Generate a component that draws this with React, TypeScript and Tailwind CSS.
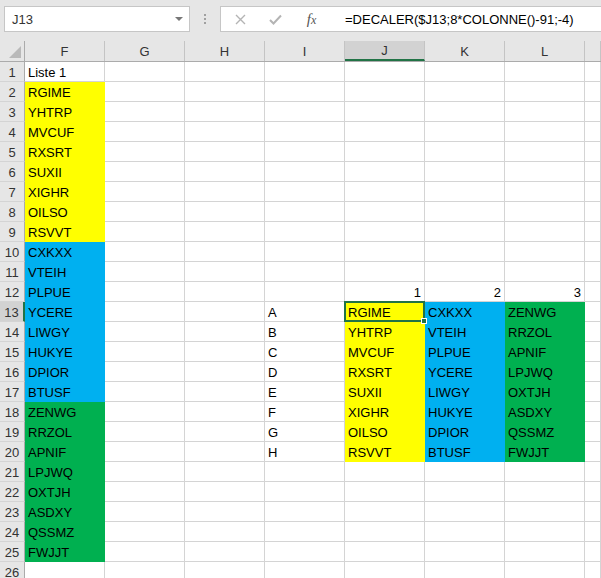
import type { ReactNode } from "react";

const YELLOW = ["RGIME", "YHTRP", "MVCUF", "RXSRT", "SUXII", "XIGHR", "OILSO", "RSVVT"];
const BLUE = ["CXKXX", "VTEIH", "PLPUE", "YCERE", "LIWGY", "HUKYE", "DPIOR", "BTUSF"];
const GREEN = ["ZENWG", "RRZOL", "APNIF", "LPJWQ", "OXTJH", "ASDXY", "QSSMZ", "FWJJT"];
const LETTERS = ["A", "B", "C", "D", "E", "F", "G", "H"];

const COLUMNS = ["F", "G", "H", "I", "J", "K", "L", ""];
const ROWS = Array.from({ length: 26 }, (_, i) => i + 1);

type Fill = "yellow" | "blue" | "green" | null;

type CellData = { text?: string; fill: Fill; right?: boolean };

const FILL_CLASS: Record<string, string> = {
  yellow: "bg-[#ffff00] border-[#ffff00]",
  blue: "bg-[#00b0f0] border-[#00b0f0]",
  green: "bg-[#00b050] border-[#00b050]",
};

function getCell(row: number, col: string): CellData {
  if (col === "F") {
    if (row === 1) return { text: "Liste 1", fill: null };
    if (row >= 2 && row <= 9) return { text: YELLOW[row - 2], fill: "yellow" };
    if (row >= 10 && row <= 17) return { text: BLUE[row - 10], fill: "blue" };
    if (row >= 18 && row <= 25) return { text: GREEN[row - 18], fill: "green" };
  }
  if (row === 12) {
    if (col === "J") return { text: "1", fill: null, right: true };
    if (col === "K") return { text: "2", fill: null, right: true };
    if (col === "L") return { text: "3", fill: null, right: true };
  }
  if (row >= 13 && row <= 20) {
    const i = row - 13;
    if (col === "I") return { text: LETTERS[i], fill: null };
    if (col === "J") return { text: YELLOW[i], fill: "yellow" };
    if (col === "K") return { text: BLUE[i], fill: "blue" };
    if (col === "L") return { text: GREEN[i], fill: "green" };
  }
  return { fill: null };
}

function Cell({ row, col }: { row: number; col: string }) {
  const data = getCell(row, col);
  const width = col === "" ? "flex-1" : "w-[80px]";
  const fill = data.fill ? FILL_CLASS[data.fill] : "bg-white border-[#d4d4d4]";
  const selected = row === 13 && col === "J";
  return (
    <div
      className={`relative h-5 shrink-0 border-r border-b ${width} ${fill} flex items-center px-[3px] pt-[2px] text-[13px] leading-none text-black ${
        data.right ? "justify-end" : "justify-start"
      }`}
    >
      {data.text}
      {selected && (
        <div className="absolute -left-[1px] -top-[1px] -right-[1px] -bottom-[1px] z-10 border-2 border-[#217346]">
          <div className="absolute -right-[4px] -bottom-[4px] h-[6px] w-[6px] border border-white bg-[#217346]" />
        </div>
      )}
    </div>
  );
}

function ToolbarIcon({ children }: { children: ReactNode }) {
  return <div className="flex w-[35px] items-center justify-center">{children}</div>;
}

export default function App() {
  return (
    <div
      className="h-[578px] w-[601px] overflow-hidden bg-white"
      style={{ fontFamily: '"Liberation Sans", Arial, sans-serif' }}
    >
      {/* formula bar */}
      <div className="flex h-[41px] items-start bg-[#e6e6e6] pt-[6px]">
        <div className="ml-[4px] flex h-[26px] w-[186px] items-center justify-between border border-[#c6c6c6] bg-white pl-[7px] pr-[6px]">
          <span className="pt-[1px] text-[13px] text-[#333]">J13</span>
          <span className="h-0 w-0 border-x-[4px] border-t-[4px] border-x-transparent border-t-[#777]" />
        </div>
        <div className="flex h-[26px] w-[30px] flex-col items-center justify-center gap-[2px]">
          <span className="h-[2px] w-[2px] bg-[#a0a0a0]" />
          <span className="h-[2px] w-[2px] bg-[#a0a0a0]" />
          <span className="h-[2px] w-[2px] bg-[#a0a0a0]" />
        </div>
        <div className="flex h-[26px] flex-1 items-center border border-r-0 border-[#c6c6c6] bg-white">
          <div className="flex pl-[2px]">
            <ToolbarIcon>
              <svg width="11" height="11" viewBox="0 0 11 11">
                <path d="M1 1 L10 10 M10 1 L1 10" stroke="#b4b4b4" strokeWidth="1.4" fill="none" />
              </svg>
            </ToolbarIcon>
            <ToolbarIcon>
              <svg width="13" height="11" viewBox="0 0 13 11">
                <path d="M1 6 L4.5 9.5 L12 1.5" stroke="#b4b4b4" strokeWidth="2" fill="none" />
              </svg>
            </ToolbarIcon>
            <ToolbarIcon>
              <span
                className="pl-[2px] text-[15px] italic text-[#555]"
                style={{ fontFamily: '"Liberation Serif", "Times New Roman", serif' }}
              >
                f<span className="text-[12px]">x</span>
              </span>
            </ToolbarIcon>
          </div>
          <span className="ml-[17px] pt-[1px] text-[13px] text-black">=DECALER($J13;8*COLONNE()-91;-4)</span>
        </div>
      </div>

      {/* column headers */}
      <div className="flex h-[21px] border-b border-[#ababab] bg-[#e6e6e6]">
        <div className="relative w-[25px] shrink-0 border-r border-[#ababab]">
          <span className="absolute right-[3px] bottom-[3px] h-0 w-0 border-l-[12px] border-l-transparent border-b-[#b9b9b9] [border-bottom-width:12px]" />
        </div>
        {COLUMNS.map((c) => (
          <div
            key={c || "end"}
            className={`flex shrink-0 items-center justify-center border-r border-[#c4c4c4] pt-[2px] text-[13px] text-[#333] ${
              c === "" ? "flex-1" : "w-[80px]"
            } ${c === "J" ? "border-b-2 border-b-[#217346] bg-[#d2d2d2]" : ""}`}
          >
            {c}
          </div>
        ))}
      </div>

      {/* grid */}
      {ROWS.map((r) => (
        <div key={r} className="flex">
          <div
            className={`flex h-5 w-[25px] shrink-0 items-center justify-center border-b border-[#d4d4d4] pt-[2px] text-[13px] text-[#333] ${
              r === 13 ? "border-r-2 border-r-[#217346] bg-[#d2d2d2]" : "border-r border-r-[#ababab] bg-[#e6e6e6]"
            }`}
          >
            {r}
          </div>
          {COLUMNS.map((c) => (
            <Cell key={c || "end"} row={r} col={c} />
          ))}
        </div>
      ))}
    </div>
  );
}
